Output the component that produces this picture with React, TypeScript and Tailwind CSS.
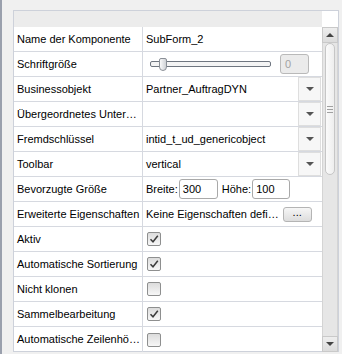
import { ReactNode } from 'react';

const font = { fontFamily: '"Liberation Sans", Arial, sans-serif' };

const Dropdown = () => (
  <div className="ml-auto mr-[1px] flex h-[24px] w-[23px] items-center justify-center border border-[#dedede] bg-[#f7f7f7]">
    <div className="h-0 w-0 border-x-[4px] border-t-[4px] border-x-transparent border-t-[#555]" />
  </div>
);

const Checkbox = ({ checked }: { checked?: boolean }) => (
  <div className="ml-[1px] flex h-[14px] w-[14px] items-center justify-center rounded-[2px] border border-[#8e8f8f] bg-gradient-to-b from-[#dcdcdc] to-[#f7f7f7]">
    {checked && (
      <svg width="10" height="10" viewBox="0 0 10 10">
        <path d="M1.5 5.2 L4 7.8 L8.8 1.8" fill="none" stroke="#3c3c3c" strokeWidth="1.5" />
      </svg>
    )}
  </div>
);

const Row = ({ label, children, last }: { label: string; children?: ReactNode; last?: boolean }) => (
  <div className={`flex h-[25px] ${last ? '' : 'border-b border-[#d6d9e0]'}`}>
    <div className="flex w-[129px] shrink-0 items-center border-r border-[#d6d9e0] pl-[3px] whitespace-nowrap">
      {label}
    </div>
    <div className="flex min-w-0 flex-1 items-center pl-[3px] whitespace-nowrap">{children}</div>
  </div>
);

const Slider = () => (
  <div className="flex w-full items-center">
    <div className="relative ml-[4px] h-[24px] w-[121px]">
      <div className="absolute left-0 top-[9px] h-[6px] w-[121px] rounded-[2px] border border-[#6f7680] bg-[#f4f4f4]" />
      <div className="absolute left-[9px] top-[6px] h-[13px] w-[8px] rounded-b-[4px] rounded-t-[2px] border border-[#8a8f96] bg-gradient-to-r from-[#fafafa] to-[#cfd2d6]" />
    </div>
    <div className="ml-[9px] flex h-[20px] w-[29px] items-center rounded-[3px] border border-[#b9b9b9] bg-[#ebebeb] pl-[4px] text-[#a3a3a3]">
      0
    </div>
  </div>
);

const ScrollButton = ({ up }: { up?: boolean }) => (
  <div className="flex h-[16px] w-[16px] items-center justify-center border border-[#c9c9c9] bg-gradient-to-b from-[#eeeeee] to-[#dcdcdc]">
    <div
      className={`h-0 w-0 border-x-[4px] border-x-transparent ${up ? 'border-b-[4px] border-b-[#444]' : 'border-t-[4px] border-t-[#444]'}`}
    />
  </div>
);

export default function App() {
  return (
    <div className="flex h-[354px] w-[342px] bg-[#f0f0f0] text-[11px] text-black" style={font}>
      <div className="w-[2px] bg-[#9aa0ad]" />
      <div className="ml-[11px] mt-[10px] flex h-[342px] w-[326px] flex-col border border-[#cdd1da] bg-white">
        <div className="flex h-[16px] shrink-0">
          <div className="flex-1 bg-[#ececec]" />
          <div className="w-[16px] bg-white" />
        </div>
        <div className="flex flex-1">
          <div className="flex w-[308px] flex-col">
            <Row label="Name der Komponente">SubForm_2</Row>
            <Row label="Schriftgröße">
              <Slider />
            </Row>
            <Row label="Businessobjekt">
              <span>Partner_AuftragDYN</span>
              <Dropdown />
            </Row>
            <Row label="Übergeordnetes Unter…">
              <Dropdown />
            </Row>
            <Row label="Fremdschlüssel">
              <span>intid_t_ud_genericobject</span>
              <Dropdown />
            </Row>
            <Row label="Toolbar">
              <span>vertical</span>
              <Dropdown />
            </Row>
            <Row label="Bevorzugte Größe">
              <span>Breite:</span>
              <div className="ml-[1px] flex h-[20px] w-[39px] items-center rounded-[3px] border border-[#a9a9a9] pl-[3px]">300</div>
              <span className="ml-[4px]">Höhe:</span>
              <div className="ml-[1px] flex h-[20px] w-[38px] items-center rounded-[3px] border border-[#a9a9a9] pl-[3px]">100</div>
            </Row>
            <Row label="Erweiterte Eigenschaften">
              <span>Keine Eigenschaften defi…</span>
              <div className="ml-[4px] flex h-[15px] w-[29px] items-center justify-center rounded-[3px] border border-[#b4b4b4] bg-gradient-to-b from-[#f6f6f6] to-[#dddddd] pb-[3px] text-[11px]">
                ...
              </div>
            </Row>
            <Row label="Aktiv">
              <Checkbox checked />
            </Row>
            <Row label="Automatische Sortierung">
              <Checkbox checked />
            </Row>
            <Row label="Nicht klonen">
              <Checkbox />
            </Row>
            <Row label="Sammelbearbeitung">
              <Checkbox checked />
            </Row>
            <Row label="Automatische Zeilenhö…" last>
              <Checkbox />
            </Row>
          </div>
          <div className="flex w-[16px] flex-col bg-[#e6e6e6]">
            <ScrollButton up />
            <div className="relative flex-1 border-x border-[#d4d4d4]">
              <div className="absolute left-[2px] top-[0px] flex h-[132px] w-[10px] flex-col items-center justify-center gap-[2px] rounded-[5px] border border-[#c6c6c6] bg-gradient-to-r from-[#fbfbfb] to-[#eeeeee]">
                <div className="h-px w-[6px] bg-[#a0a0a0]" />
                <div className="h-px w-[6px] bg-[#a0a0a0]" />
                <div className="h-px w-[6px] bg-[#a0a0a0]" />
              </div>
            </div>
            <ScrollButton />
          </div>
        </div>
      </div>
    </div>
  );
}
